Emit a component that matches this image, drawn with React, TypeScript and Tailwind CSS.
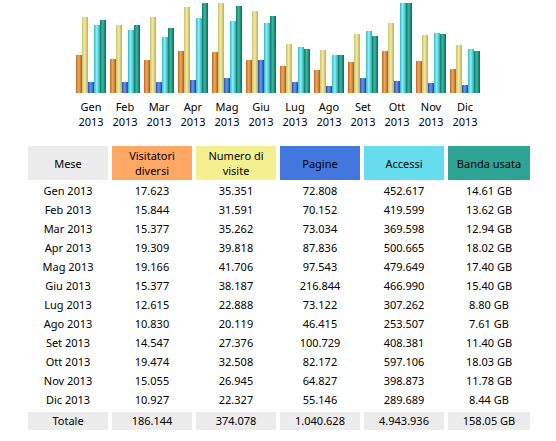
const months = ["Gen","Feb","Mar","Apr","Mag","Giu","Lug","Ago","Set","Ott","Nov","Dic"];
const data: [number, number, number, number, number][] = [
  [17623,35351,72808,452617,14.61],
  [15844,31591,70152,419599,13.62],
  [15377,35262,73034,369598,12.94],
  [19309,39818,87836,500665,18.02],
  [19166,41706,97543,479649,17.40],
  [15377,38187,216844,466990,15.40],
  [12615,22888,73122,307262,8.80],
  [10830,20119,46415,253507,7.61],
  [14547,27376,100729,408381,11.40],
  [19474,32508,82172,597106,18.03],
  [15055,26945,64827,398873,11.78],
  [10927,22327,55146,289689,8.44],
];
const fmt = (n: number) => n.toLocaleString("de-DE");
const barCls = [
  "bg-[linear-gradient(90deg,#c06a1a,#f0a860_45%,#b05e10)]",
  "bg-[linear-gradient(90deg,#c8c070,#f4ec9c_45%,#b8b060)]",
  "bg-[linear-gradient(90deg,#2a50b0,#6a96ee_45%,#2244a0)]",
  "bg-[linear-gradient(90deg,#30b8c8,#8ef0f8_45%,#28a8b8)]",
  "bg-[linear-gradient(90deg,#0e7a68,#3ab8a0_45%,#0a6858)]",
];
const H = 90;
const maxV = 41706, maxH = 597106, maxK = 18.03;

export default function App() {
  return (
    <div className="w-[556px] h-[441px] bg-white text-black text-[11px] font-['DejaVu_Sans','Verdana',sans-serif] overflow-hidden">
      <div className="flex justify-center">
        {months.map((m, i) => {
          const d = data[i];
          const hs = [d[0]/maxV, d[1]/maxV, d[2]/maxH, d[3]/maxH, d[4]/maxK].map(v => Math.round(v*H));
          return (
            <div key={m} className="w-[34px] flex flex-col items-center">
              <div className="h-[93px] flex items-end">
                {hs.map((h, j) => (
                  <div key={j} className={`w-[6px] ${barCls[j]}`} style={{ height: h }} />
                ))}
              </div>
              <div className="mt-[6px] leading-[15px] text-center">{m}<br />2013</div>
            </div>
          );
        })}
      </div>
      <div className="ml-[28px] mt-[17px] w-[502px] grid grid-cols-[80px_80px_80px_80px_80px_82px] gap-x-[4px] gap-y-[2px] text-center">
        <div className="h-[34px] flex items-center justify-center bg-[#ececec] leading-[15px]">Mese</div>
        <div className="h-[34px] flex items-center justify-center bg-[#ffa866] leading-[15px]">Visitatori<br/>diversi</div>
        <div className="h-[34px] flex items-center justify-center bg-[#f4f090] leading-[15px]">Numero di<br/>visite</div>
        <div className="h-[34px] flex items-center justify-center bg-[#4477dd] leading-[15px]">Pagine</div>
        <div className="h-[34px] flex items-center justify-center bg-[#66ddee] leading-[15px]">Accessi</div>
        <div className="h-[34px] flex items-center justify-center bg-[#2ea495] leading-[15px]">Banda usata</div>
        {data.map((d, i) => (
          <div key={i} className="contents">
            <div className="h-[17px] leading-[17px]">{months[i]} 2013</div>
            <div className="h-[17px] leading-[17px]">{fmt(d[0])}</div>
            <div className="h-[17px] leading-[17px]">{fmt(d[1])}</div>
            <div className="h-[17px] leading-[17px]">{fmt(d[2])}</div>
            <div className="h-[17px] leading-[17px]">{fmt(d[3])}</div>
            <div className="h-[17px] leading-[17px]">{d[4].toFixed(2)} GB</div>
          </div>
        ))}
        {["Totale","186.144","374.078","1.040.628","4.943.936","158.05 GB"].map((t, i) => (
          <div key={i} className="mt-[2px] h-[18px] leading-[18px] bg-[#ececec]">{t}</div>
        ))}
      </div>
    </div>
  );
}
